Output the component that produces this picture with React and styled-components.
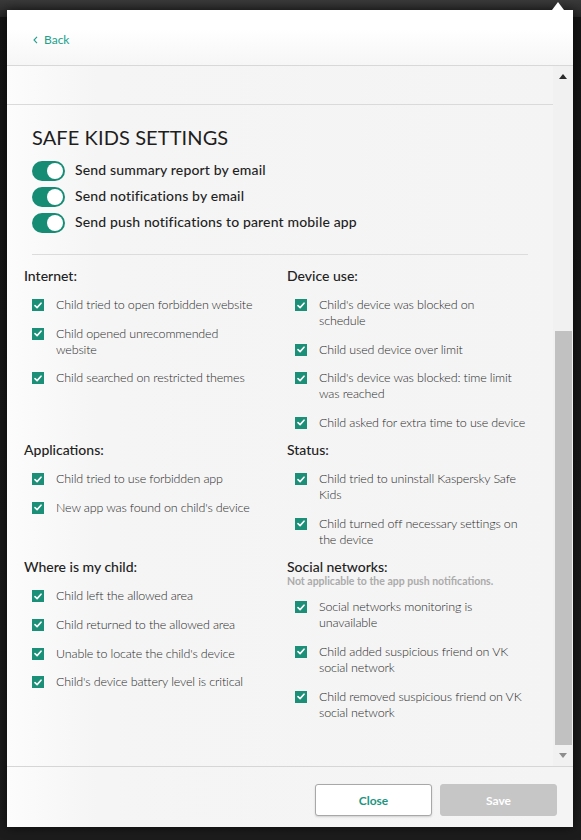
import React from 'react';
import styled, { createGlobalStyle } from 'styled-components';

const Global = createGlobalStyle`
  html, body { margin: 0; padding: 0; }
  body { background: #1b1b1b; font-family: Lato, "Open Sans", sans-serif; }
`;

const TEAL = '#178c75';

const Screen = styled.div`
  width: 581px;
  height: 840px;
  box-sizing: border-box;
  padding: 10px 8px 13px 7px;
  display: flex;
  background: linear-gradient(#3a3a3a 0, #262626 17px, #141414 17px, #1c1c1c 100%);
`;

const Modal = styled.div`
  position: relative;
  flex: 1;
  display: flex;
  flex-direction: column;
  background: linear-gradient(to right, #fcfcfc 0, #f5f5f5 90px, #f4f4f4 100%);
  box-shadow: 0 0 10px rgba(0, 0, 0, 0.6);
  &::before {
    content: '';
    position: absolute;
    top: -8px;
    right: 9px;
    border-left: 6px solid transparent;
    border-right: 6px solid transparent;
    border-bottom: 8px solid #fff;
  }
`;

const Header = styled.div`
  height: 56px;
  box-sizing: border-box;
  flex: none;
  display: flex;
  align-items: center;
  padding: 4px 0 0 26px;
  border-bottom: 1px solid #d8d8d8;
  background: linear-gradient(to bottom, #ffffff 35%, #f6f6f6 100%);
`;

const BackLink = styled.a`
  display: flex;
  align-items: center;
  gap: 6px;
  color: #22a08a;
  font-size: 12px;
  text-decoration: none;
  cursor: pointer;
`;

const Body = styled.div`
  height: 700px;
  flex: none;
  display: flex;
`;

const Content = styled.div`
  flex: 1;
  overflow: hidden;
  display: flex;
  flex-direction: column;
`;

const Stub = styled.div`
  height: 38px;
  flex: none;
  border-bottom: 1px solid #dadada;
`;

const Settings = styled.div`
  padding: 20px 25px 0 25px;
`;

const Title = styled.h1`
  margin: 0 0 12px;
  font-size: 20px;
  line-height: 24px;
  font-weight: 400;
  color: #1e1e1e;
  letter-spacing: 0.1px;
`;

const ToggleList = styled.div`
  display: flex;
  flex-direction: column;
  gap: 6px;
`;

const ToggleRow = styled.label`
  display: flex;
  align-items: center;
  gap: 10px;
  font-size: 14px;
  letter-spacing: 0.15px;
  font-weight: 500;
  color: #1f1f1f;
  span:last-child {
    margin-top: -4px;
  }
`;

const Switch = styled.span`
  position: relative;
  width: 33px;
  height: 20px;
  flex: none;
  border-radius: 10px;
  background: ${TEAL};
  &::after {
    content: '';
    position: absolute;
    top: 2px;
    right: 2px;
    width: 16px;
    height: 16px;
    border-radius: 50%;
    background: #fff;
  }
`;

const Divider = styled.div`
  height: 1px;
  margin-top: 20.5px;
  background: #dcdcdc;
`;

const Grid = styled.div`
  display: grid;
  grid-template-columns: 1fr 1fr;
  column-gap: 22px;
  row-gap: 10.5px;
  padding: 12.5px 25px 40px 17px;
`;

const Section = styled.div`
  display: flex;
  flex-direction: column;
`;

const Heading = styled.div`
  font-size: 14px;
  line-height: ${(p) => (p.$tight ? '17px' : '18px')};
  font-weight: 500;
  color: #222;
`;

const Note = styled.div`
  font-size: 10.5px;
  line-height: 12px;
  font-weight: 700;
  color: #ababab;
`;

const List = styled.div`
  display: flex;
  flex-direction: column;
  gap: 12.6px;
  padding-left: 8px;
  margin-top: 12px;
`;

const Item = styled.div`
  display: flex;
  gap: 12px;
  font-size: 12.5px;
  letter-spacing: -0.15px;
  line-height: 16px;
  font-weight: 300;
  color: #2a2a2a;
  white-space: pre-line;
`;

const Check = styled.span`
  width: 12px;
  height: 12px;
  margin-top: 2px;
  flex: none;
  background: #1b8f78;
  display: flex;
  align-items: center;
  justify-content: center;
`;

const Scrollbar = styled.div`
  width: 20px;
  flex: none;
  display: flex;
  flex-direction: column;
  background: #f1f1f1;
`;

const ArrowBtn = styled.div`
  height: ${(p) => p.$h}px;
  flex: none;
  display: flex;
  align-items: center;
  justify-content: center;
  &::after {
    content: '';
    border-left: 4px solid transparent;
    border-right: 4px solid transparent;
    ${(p) => (p.$down ? 'border-top: 5px solid #8d8d8d;' : 'border-bottom: 5px solid #2b2b2b;')}
  }
`;

const Track = styled.div`
  flex: 1;
  display: flex;
  flex-direction: column;
  justify-content: flex-end;
  padding: 0 1px 0 2px;
`;

const Thumb = styled.div`
  height: 414px;
  background: #c1c1c1;
`;

const Footer = styled.div`
  flex: 1;
  display: flex;
  justify-content: flex-end;
  align-items: flex-start;
  gap: 8px;
  padding: 17px 16px 0 0;
  border-top: 1px solid #d6d6d6;
`;

const Button = styled.button`
  width: 117px;
  height: 32px;
  border-radius: 3px;
  font-family: inherit;
  font-size: 12px;
  font-weight: 700;
  cursor: pointer;
  border: 1px solid ${(p) => (p.$primary ? '#c6c6c6' : '#a8a8a8')};
  background: ${(p) => (p.$primary ? '#c6c6c6' : '#fff')};
  color: ${(p) => (p.$primary ? '#fff' : '#1d957f')};
  box-shadow: ${(p) => (p.$primary ? 'none' : '0 1px 2px rgba(0,0,0,0.15)')};
`;

const toggles = [
  'Send summary report by email',
  'Send notifications by email',
  'Send push notifications to parent mobile app',
];

const sections = [
  { title: 'Internet:', items: ['Child tried to open forbidden website', 'Child opened unrecommended\nwebsite', 'Child searched on restricted themes'] },
  { title: 'Device use:', items: ["Child's device was blocked on\nschedule", 'Child used device over limit', "Child's device was blocked: time limit\nwas reached", 'Child asked for extra time to use device'] },
  { title: 'Applications:', items: ['Child tried to use forbidden app', "New app was found on child's device"] },
  { title: 'Status:', items: ['Child tried to uninstall Kaspersky Safe\nKids', 'Child turned off necessary settings on\nthe device'] },
  { title: 'Where is my child:', items: ['Child left the allowed area', 'Child returned to the allowed area', "Unable to locate the child's device", "Child's device battery level is critical"] },
  { title: 'Social networks:', tight: true, note: 'Not applicable to the app push notifications.', items: ['Social networks monitoring is\nunavailable', 'Child added suspicious friend on VK\nsocial network', 'Child removed suspicious friend on VK\nsocial network'] },
];

const CheckMark = () => (
  <svg width="8" height="7" viewBox="0 0 8 7">
    <path d="M1 3.6 L3.1 5.6 L7 1.2" fill="none" stroke="#fff" strokeWidth="1.6" strokeLinecap="round" strokeLinejoin="round" />
  </svg>
);

export default function App() {
  return (
    <>
      <Global />
      <Screen>
        <Modal>
          <Header>
            <BackLink>
              <svg width="5" height="8" viewBox="0 0 5 8">
                <path d="M4 0.8 L1 4 L4 7.2" fill="none" stroke="#22a08a" strokeWidth="1.1" />
              </svg>
              Back
            </BackLink>
          </Header>
          <Body>
            <Content>
              <Stub />
              <Settings>
                <Title>SAFE KIDS SETTINGS</Title>
                <ToggleList>
                  {toggles.map((t) => (
                    <ToggleRow key={t}>
                      <Switch />
                      <span>{t}</span>
                    </ToggleRow>
                  ))}
                </ToggleList>
                <Divider />
              </Settings>
              <Grid>
                {sections.map((s) => (
                  <Section key={s.title}>
                    <Heading $tight={s.tight}>{s.title}</Heading>
                    {s.note && <Note>{s.note}</Note>}
                    <List>
                      {s.items.map((it) => (
                        <Item key={it}>
                          <Check><CheckMark /></Check>
                          <span>{it}</span>
                        </Item>
                      ))}
                    </List>
                  </Section>
                ))}
              </Grid>
            </Content>
            <Scrollbar>
              <ArrowBtn $h={20} />
              <Track><Thumb /></Track>
              <ArrowBtn $h={21} $down />
            </Scrollbar>
          </Body>
          <Footer>
            <Button>Close</Button>
            <Button $primary>Save</Button>
          </Footer>
        </Modal>
      </Screen>
    </>
  );
}
